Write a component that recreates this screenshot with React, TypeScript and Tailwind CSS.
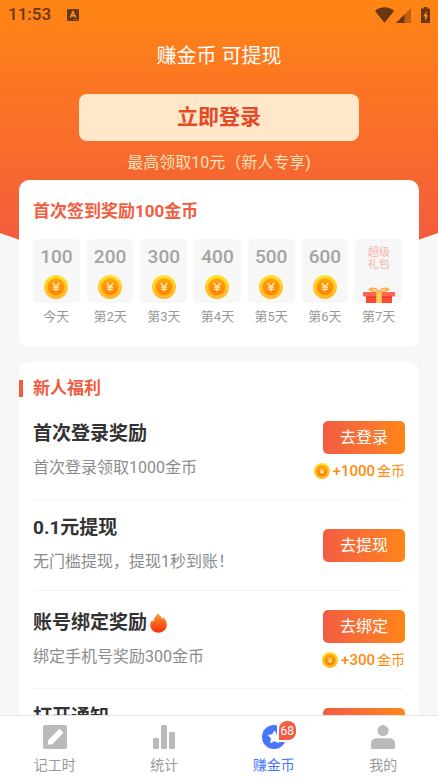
import { useState } from "react";
import clsx from "clsx";

const days = [
  { label: "今天", amount: 100 },
  { label: "第2天", amount: 200 },
  { label: "第3天", amount: 300 },
  { label: "第4天", amount: 400 },
  { label: "第5天", amount: 500 },
  { label: "第6天", amount: 600 },
];

const tasks = [
  { title: "首次登录奖励", desc: "首次登录领取1000金币", action: "去登录", coins: 1000 },
  { title: "0.1元提现", desc: "无门槛提现，提现1秒到账！", action: "去提现" },
  { title: "账号绑定奖励", desc: "绑定手机号奖励300金币", action: "去绑定", coins: 300, hot: true },
  { title: "打开通知", action: "去打开" },
];

const tabs = [
  { id: "hours", label: "记工时", icon: <PencilIcon /> },
  { id: "stats", label: "统计", icon: <BarsIcon /> },
  { id: "coins", label: "赚金币", icon: <StarCoinIcon />, badge: 68 },
  { id: "me", label: "我的", icon: <UserIcon /> },
];

function Coin({ className }: { className?: string }) {
  return (
    <svg viewBox="0 0 24 24" className={className} aria-hidden="true">
      <defs>
        <linearGradient id="coinOuter" x1="0" y1="0" x2="0" y2="1">
          <stop offset="0" stopColor="#ffe32b" />
          <stop offset="1" stopColor="#ffb52a" />
        </linearGradient>
        <linearGradient id="coinInner" x1="0" y1="0" x2="0" y2="1">
          <stop offset="0" stopColor="#ffa60a" />
          <stop offset="1" stopColor="#ff7e06" />
        </linearGradient>
      </defs>
      <circle cx="12" cy="12" r="12" fill="url(#coinOuter)" />
      <circle cx="12" cy="12" r="9" fill="#ffb010" />
      <circle cx="12" cy="11.8" r="8" fill="url(#coinInner)" />
      <path d="M8.800 8l3.200 4 3.200-4M12 12v4.500M9 12.200h6M9 14.300h6" fill="none" stroke="#ffefb0" strokeWidth="1.300" />
    </svg>
  );
}

function Gift() {
  return (
    <svg viewBox="0 0 32 16" className="h-4 w-8" aria-hidden="true">
      <path d="M16 5.500C12.500 5 8 5.200 5 2.200 8.500-.6 14 .2 16 4c2-3.800 7.500-4.600 11-1.800-3 3-7.500 2.800-11 3.300z" fill="#ffa940" />
      <path d="M15 4.300c-1.800-1.600-3.800-2.200-6-2 1.300 1.100 3.700 1.900 6 2zm2 0c1.800-1.600 3.800-2.200 6-2-1.300 1.100-3.700 1.900-6 2z" fill="#f7f7f7" />
      <rect x="3" y="8" width="26" height="8" fill="#fb4a35" />
      <rect x="0" y="5" width="32" height="4.500" rx="0.500" fill="#ff6552" />
      <rect x="3" y="9.500" width="26" height="1" fill="#e0392b" />
      <rect x="13" y="5" width="6" height="11" fill="#ffb53e" />
      <rect x="14.500" y="5" width="3" height="11" fill="#ffd06a" />
    </svg>
  );
}

function Flame() {
  return (
    <svg viewBox="0 0 18 21" className="h-5 w-[17px]" aria-hidden="true">
      <defs>
        <linearGradient id="flame" x1="0" y1="0" x2="0" y2="1">
          <stop offset="0" stopColor="#ff9a2e" />
          <stop offset="1" stopColor="#f42f0c" />
        </linearGradient>
      </defs>
      <path
        d="M8.800.3c.3 2.400 3.600 3.400 4.600 6.200.4-.6.600-1.200.6-2C16.300 6.600 17.700 9.300 17.700 12.300c0 4.800-3.700 8.400-8.700 8.400S.3 17.200.3 12.600c0-2.200.9-3.700 1.900-5.100.3.900.8 1.400 1.500 1.700C3.700 6 5.800 3.300 8.800.3z"
        fill="url(#flame)"
      />
    </svg>
  );
}

function PencilIcon() {
  return (
    <svg viewBox="0 0 24 24" className="size-6" fill="currentColor" aria-hidden="true">
      <rect width="24" height="24" rx="2.500" />
      <path d="M5 19.500v-4.200L16.500 3.800l4 4L9 19.500z" fill="#fff" />
    </svg>
  );
}

function BarsIcon() {
  return (
    <svg viewBox="0 0 24 24" className="size-6" fill="currentColor" aria-hidden="true">
      <rect x="1" y="13" width="6" height="11" rx="1.200" />
      <rect x="9" y="0" width="6" height="24" rx="1.200" />
      <rect x="17" y="7" width="6" height="17" rx="1.200" />
    </svg>
  );
}

function StarCoinIcon() {
  return (
    <svg viewBox="0 0 24 24" className="size-6" aria-hidden="true">
      <circle cx="12" cy="12" r="12" fill="#4a76fd" />
      <path
        d="M12.500 6l1.900 3.700 4.100.7-2.900 3 .6 4.200-3.700-1.900-3.700 1.900.6-4.200-2.900-3 4.100-.7z"
        fill="#fff"
        stroke="#fff"
        strokeWidth="1"
        strokeLinejoin="round"
      />
    </svg>
  );
}

function UserIcon() {
  return (
    <svg viewBox="0 0 24 24" className="size-6" fill="currentColor" aria-hidden="true">
      <circle cx="12" cy="5.600" r="5.600" />
      <path d="M0 22.500V19c0-3.500 2-5.700 5.500-5.700h13c3.500 0 5.500 2.200 5.500 5.700v3.500c0 1-.5 1.500-1.500 1.500h-21C.5 24 0 23.500 0 22.500z" />
    </svg>
  );
}

function StatusBar() {
  return (
    <div className="flex h-[30px] items-center justify-between px-2 text-[#693710]">
      <div className="flex items-center gap-4">
        <span className="text-[17px] font-medium">11:53</span>
        <svg viewBox="0 0 12 12" className="size-3" aria-hidden="true">
          <rect width="12" height="12" rx="1.300" fill="currentColor" />
          <path d="M3.300 8.500L6 2.700l2.700 5.800M4.300 6.800h3.400" fill="none" stroke="#ff9a40" strokeWidth="1.400" />
          <path d="M6.500 10.800h1.200M9 10.800h1.200" stroke="#ff9a40" strokeWidth="0.800" />
        </svg>
      </div>
      <div className="flex items-center">
        <svg viewBox="0 0 19 16" className="h-4 w-[19px]" aria-hidden="true">
          <path d="M0 4C5.500-.9 13.500-.9 19 4L9.500 15.700z" fill="currentColor" />
        </svg>
        <svg viewBox="0 0 15 15" className="ml-[2px] h-[15px] w-[15px]" aria-hidden="true">
          <path d="M15 0v15H0z" fill="#c06012" />
          <path d="M8.500 6.500V15H0z" fill="currentColor" />
        </svg>
        <svg viewBox="0 0 9 16" className="ml-[10px] h-4 w-[9px]" aria-hidden="true">
          <path d="M2.800 0h3.400v1.500H8c.6 0 1 .4 1 1V15c0 .6-.4 1-1 1H1c-.6 0-1-.4-1-1V2.500c0-.6.4-1 1-1h1.800z" fill="currentColor" />
          <path d="M5.500 4L2.300 9.300h1.800V14l3-5.700H5.500z" fill="#ff8a24" />
        </svg>
      </div>
    </div>
  );
}

export default function App() {
  const [active, setActive] = useState("coins");

  return (
    <div className="flex h-screen flex-col bg-[#f7f7f7] font-['Roboto','Noto_Sans_CJK_SC',sans-serif]">
      <main className="relative min-h-0 flex-1 overflow-y-auto [scrollbar-width:none]">
        <svg viewBox="0 0 438 280" preserveAspectRatio="none" className="absolute inset-x-0 top-0 h-[280px] w-full" aria-hidden="true">
          <defs>
            <linearGradient id="hero" x1="0" y1="0" x2="0" y2="240" gradientUnits="userSpaceOnUse">
              <stop offset="0" stopColor="#ff8514" />
              <stop offset="1" stopColor="#f35c3c" />
            </linearGradient>
          </defs>
          <path d="M0 0h438v233Q219 313 0 233z" fill="url(#hero)" />
        </svg>

        <div className="relative">
          <StatusBar />
          <header className="flex flex-col items-center">
            <h1 className="mt-3 text-[20px] leading-7 text-white">赚金币 可提现</h1>
            <button className="mt-6 h-[47px] w-[64%] rounded-lg bg-[#ffe8ca] text-[21px] font-bold text-[#e54a25]">
              立即登录
            </button>
            <p className="mt-[10px] text-[16px] leading-6 text-[#ffe0b8]">最高领取10元（新人专享)</p>
          </header>

          <section className="mx-[19px] mt-[5px] rounded-[10px] bg-white px-[14px] pt-[19px] pb-5">
            <h2 className="text-[17px] leading-6 font-bold text-[#f25c41]">首次签到奖励100金币</h2>
            <ul className="mt-4 mr-[3px] grid grid-cols-7 gap-[7px] text-center">
              {days.map((d) => (
                <li key={d.label}>
                  <div className="flex h-16 flex-col items-center justify-between rounded-[5px] bg-[#f7f7f7] py-1">
                    <span className="text-[19px] leading-7 font-medium text-[#a3a3a3]">{d.amount}</span>
                    <Coin className="size-6" />
                  </div>
                  <p className="mt-1 text-[13px] leading-5 text-[#999999]">{d.label}</p>
                </li>
              ))}
              <li>
                <div className="flex h-16 flex-col items-center justify-between rounded-[5px] bg-[#f7f7f7] pt-2">
                  <span className="text-[11px] leading-3 text-[#f7b4aa]">
                    超级
                    <br />
                    礼包
                  </span>
                  <Gift />
                </div>
                <p className="mt-1 text-[13px] leading-5 text-[#999999]">第7天</p>
              </li>
            </ul>
          </section>

          <section className="mx-[19px] mt-[15px] rounded-[10px] bg-white pt-[14px]">
            <div className="flex items-center">
              <span className="h-[17px] w-1 bg-[#f25c41]" />
              <h2 className="ml-[10px] text-[17px] leading-6 font-bold text-[#f25c41]">新人福利</h2>
            </div>
            <ul className="mx-[14px] mt-[2px]">
              {tasks.map((t) => (
                <li
                  key={t.title}
                  className={clsx("flex justify-between border-b border-[#f5f5f5] py-4", t.desc ? "items-center" : "items-start")}
                >
                  <div>
                    <h3 className="flex items-center gap-[3px] text-[19px] leading-6 font-bold text-[#333333]">
                      {t.title}
                      {t.hot && <Flame />}
                    </h3>
                    {t.desc && <p className="mt-[10px] text-[16px] leading-6 text-[#8c8c8c]">{t.desc}</p>}
                  </div>
                  <div className="flex flex-col items-end pt-[3px] pb-[2px]">
                    <button className="h-[33px] w-[82px] rounded-[5px] bg-linear-to-r from-[#f25c41] to-[#ff8514] text-[16px] text-white">
                      {t.action}
                    </button>
                    {t.coins && (
                      <p className="mt-[7px] flex h-5 items-center text-[#ff8c0a]">
                        <Coin className="size-4" />
                        <span className="ml-[3px] text-[15px] font-medium">+{t.coins}</span>
                        <span className="ml-[2px] text-[14px]">金币</span>
                      </p>
                    )}
                  </div>
                </li>
              ))}
            </ul>
          </section>
        </div>
      </main>

      <nav className="grid grid-cols-4 border-t border-[#e6e6e6] bg-white">
        {tabs.map((tab) => (
          <button
            key={tab.id}
            onClick={() => setActive(tab.id)}
            className={clsx("flex flex-col items-center pt-[9px] pb-1", active === tab.id ? "text-[#4a76fd]" : "text-[#999999]")}
          >
            <span className={clsx("relative", active !== tab.id && "text-[#bababa]")}>
              {tab.icon}
              {tab.badge && (
                <span className="absolute -top-1 left-[15px] rounded-tr-[11px] rounded-br-[11px] bg-white pb-[2px] pl-[2px]">
                  <span className="flex h-[19px] w-[17px] items-center justify-center rounded-t-[8px] rounded-br-[8px] bg-[#f25c41] text-[12px] leading-none text-white">
                    {tab.badge}
                  </span>
                </span>
              )}
            </span>
            <span className="mt-[5px] text-[14px] leading-[22px]">{tab.label}</span>
          </button>
        ))}
      </nav>
    </div>
  );
}
